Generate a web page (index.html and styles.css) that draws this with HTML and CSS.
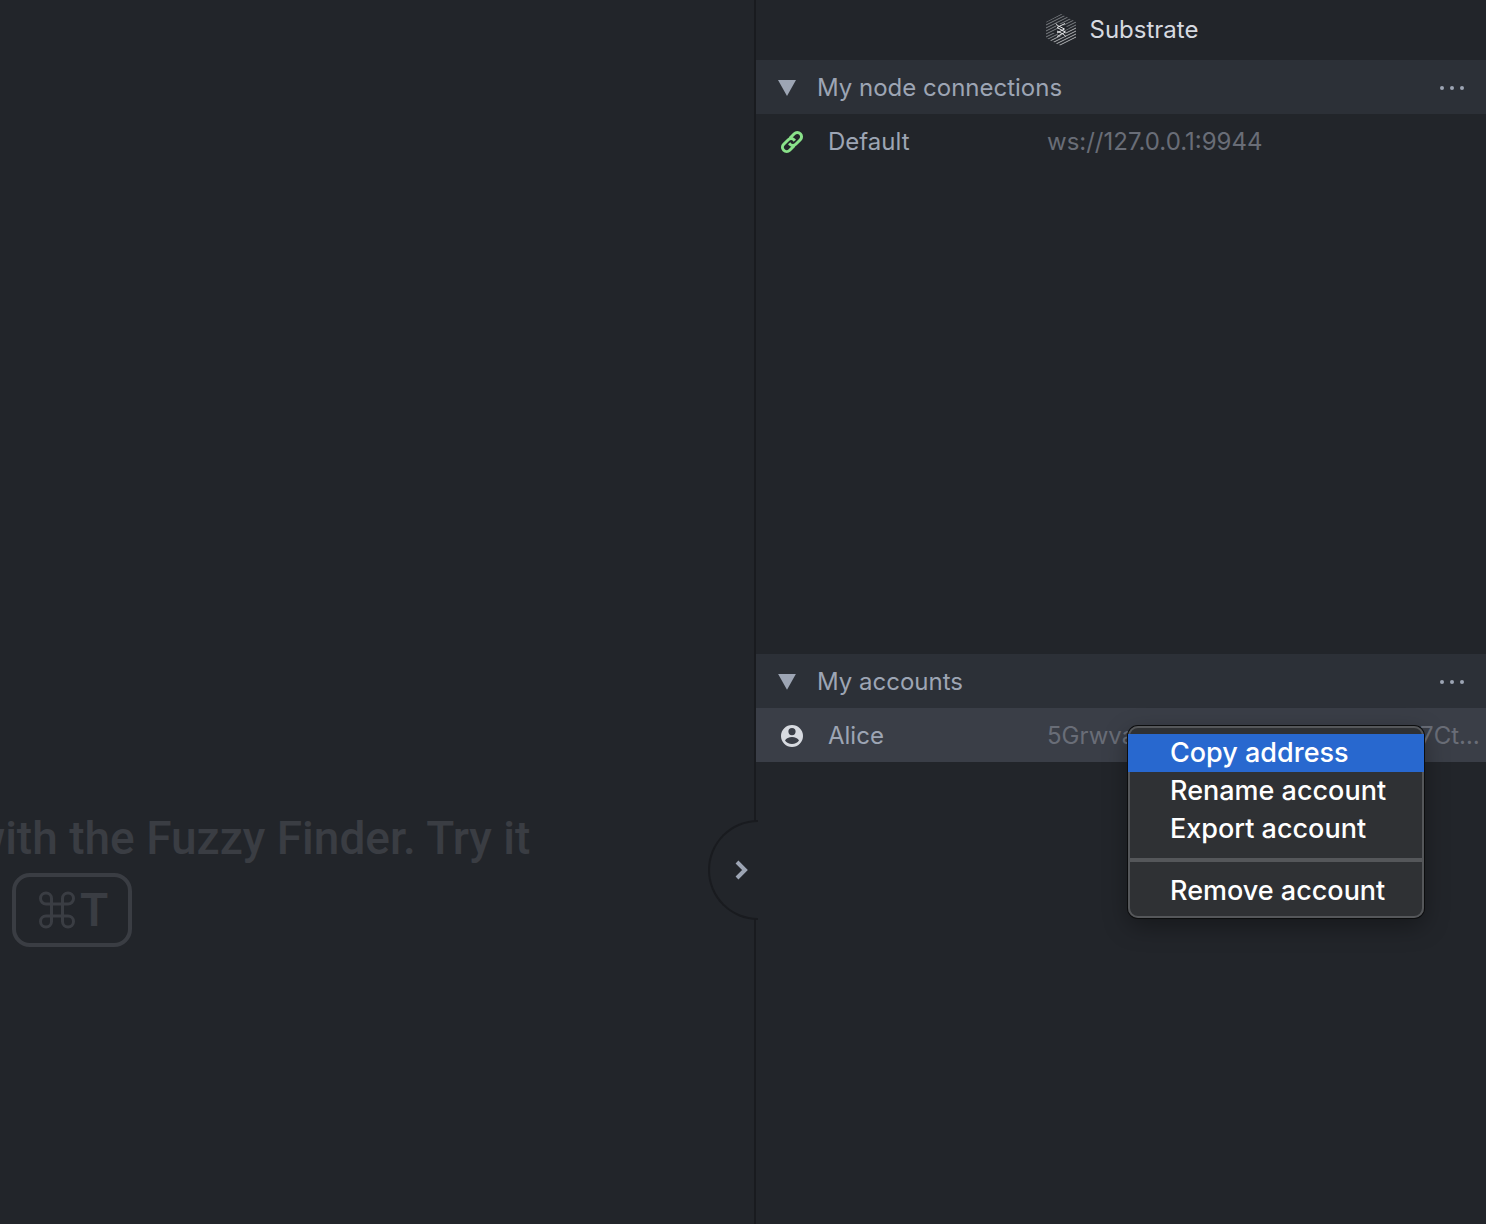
FILE: index.html
```html
<!DOCTYPE html>
<html lang="en">
<head>
<meta charset="utf-8">
<title>Substrate</title>
<link rel="stylesheet" href="styles.css">
</head>
<body>
<div class="workspace">
  <main class="editor">
    <div class="tip">
      <p class="tip-line">with the Fuzzy Finder. Try it</p>
      <p class="tip-line tip-keys"><kbd class="key"><svg class="cmd" viewBox="0 0 36 38" aria-label="Command"><path d="M12.500 13V7.500a5.500 5.500 0 1 0-5.500 5.500H29a5.500 5.500 0 1 0-5.500-5.500V30.500a5.500 5.500 0 1 0 5.500-5.500H7a5.500 5.500 0 1 0 5.500 5.500Z"/></svg>T</kbd></p>
    </div>
    <button class="toggle" aria-label="Toggle dock"><svg viewBox="0 0 14 20"><path d="M2 2l8 8-8 8"/></svg></button>
  </main>
  <aside class="dock">
    <header class="dock-title">
      <svg class="logo" viewBox="0 0 30 32" aria-hidden="true">
        <defs><clipPath id="hex"><path d="M15 0l15 8v16l-15 8-15-8V8z"/></clipPath></defs>
        <g clip-path="url(#hex)">
          <path class="hatch" d="M0 8L30-7M0 11L30-4M0 14L30-1M0 17L30 2M0 20L30 5M0 23L30 8M0 26L30 11"/>
          <path class="hatch bright" d="M0 29L30 14M0 32L30 17M0 35L30 20M0 38L30 23M0 41L30 26M0 44L30 29"/>
        </g>
        <path class="glyph-back" d="M11 11l8 3-8 4 8 3"/>
        <path class="glyph" d="M10 9.500l1.500 2 7 3.500M19 9.500l-8 4 8.500 4.500-8.500 4.500M11 17l7 3.500 1.500 2M18.500 15l-7.500 4"/>
      </svg>
      <span>Substrate</span>
    </header>
    <div class="panels">
      <section class="panel">
        <div class="panel-head"><span class="arrow"></span><h2>My node connections</h2>
          <button class="more" aria-label="Node menu"><i></i><i></i><i></i></button></div>
        <div class="row">
          <svg class="icon link" viewBox="0 0 24 24"><path d="M9.800 8.200L14.300 3.700a4 4 0 0 1 6 6L15.700 14.200a4 4 0 0 1-5.700 0l-.800-1M14.200 15.800L9.700 20.300a4 4 0 0 1-6-6L8.300 9.800a4 4 0 0 1 5.700 0l.800 1"/></svg>
          <span>Default</span><span class="detail">ws://127.0.0.1:9944</span>
        </div>
      </section>
      <section class="panel">
        <div class="panel-head"><span class="arrow"></span><h2>My accounts</h2>
          <button class="more" aria-label="Account menu"><i></i><i></i><i></i></button></div>
        <div class="row selected">
          <svg class="icon user" viewBox="0 0 24 24"><path fill-rule="evenodd" d="M12 1a11 11 0 1 0 0 22 11 11 0 0 0 0-22zM12 4a3.600 3.600 0 1 1 0 7.200A3.600 3.600 0 0 1 12 4zM5 16.500c1-2.200 4-3.500 7-3.500s6 1.300 7 3.500c-1.500 2.200-4 3.500-7 3.500s-5.500-1.300-7-3.500z"/></svg>
          <span>Alice</span><span class="detail">5GrwvaEF5zXb26Fz9rcQpDWS57CtERHpNehXCPcNoHGKutQY</span>
          <div class="menu" role="menu">
            <button class="item active" role="menuitem">Copy address</button>
            <button class="item" role="menuitem">Rename account</button>
            <button class="item" role="menuitem">Export account</button>
            <hr>
            <button class="item" role="menuitem">Remove account</button>
          </div>
        </div>
      </section>
    </div>
  </aside>
</div>
</body>
</html>
```
FILE: styles.css
```css
* { box-sizing: border-box; }
body {
  margin: 0;
  background: #22252a;
  color: #9da5b4;
  font: 24px/30px Inter, "Liberation Sans", sans-serif;
}
button { border: 0; padding: 0; background: none; color: inherit; font: inherit; }
h2, p { margin: 0; font-weight: inherit; font-size: inherit; }

.workspace {
  display: grid;
  grid-template-columns: minmax(0, 1fr) minmax(480px, 732px);
  height: 100vh;
  overflow: hidden;
}

.editor { position: relative; display: flex; align-items: center; }
.tip {
  flex: 1;
  overflow: hidden;
  padding-top: 526px;
  color: #3a3d43;
  font-family: Roboto, "Liberation Sans", sans-serif;
  font-size: 46px;
  font-weight: 500;
  line-height: 70px;
}
.tip-line { margin-left: -29px; white-space: nowrap; }
.tip-keys { margin-left: 12px; }
.key {
  display: inline-flex;
  align-items: center;
  gap: 5px;
  width: 120px;
  height: 74px;
  padding-left: 23px;
  border: 4px solid;
  border-radius: 18px;
  font: inherit;
  font-weight: 600;
}
.cmd { width: 36px; height: 38px; flex: none; fill: none; stroke: currentColor; stroke-width: 3; }

.toggle {
  position: absolute;
  right: -4px;
  top: 820px;
  z-index: 1;
  width: 50px;
  height: 100px;
  padding-left: 25px;
  border: 2px solid #191b1f;
  border-right: 0;
  border-radius: 50px 0 0 50px;
  background: #22252a;
  display: flex;
  align-items: center;
}
.toggle svg { width: 14px; height: 20px; fill: none; stroke: #9da5b4; stroke-width: 4; }

.dock {
  display: flex;
  flex-direction: column;
  min-width: 0;
  border-left: 2px solid #191b1f;
}
.dock-title {
  display: flex;
  align-items: center;
  justify-content: center;
  gap: 14px;
  height: 60px;
  padding-left: 2px;
  color: #d7dae0;
}
.logo { width: 30px; height: 32px; fill: none; }
.hatch { stroke: #7d8085; stroke-width: 1; }
.bright { stroke: #b0b2b5; }
.glyph-back { stroke: #22252a; stroke-width: 4; }
.glyph { stroke: #e4e5e7; stroke-width: 1; }

.panels { flex: 1; display: grid; grid-template-rows: 51fr 49fr; }
.panel-head {
  display: flex;
  align-items: center;
  height: 54px;
  padding: 2px 22px 0 22px;
  background: #2c3037;
}
.arrow {
  width: 18px;
  height: 16px;
  margin-right: 21px;
  background: #9da5b4;
  clip-path: polygon(0 0, 100% 0, 50% 100%);
}
.more { display: flex; gap: 6px; margin-left: auto; padding: 4px 0; }
.more i { width: 4px; height: 4px; border-radius: 50%; background: #9da5b4; }

.row {
  position: relative;
  display: grid;
  grid-template-columns: 24px 195px minmax(0, 1fr);
  column-gap: 24px;
  align-items: center;
  height: 54px;
  padding: 2px 2px 0 24px;
}
.selected { background: #3a3e47; }
.detail {
  overflow: hidden;
  color: #696d77;
  text-overflow: ellipsis;
  white-space: nowrap;
}
.icon { width: 24px; height: 24px; }
.link { fill: none; stroke: #8ae28a; stroke-width: 3; }
.user { fill: #d7dae0; }

.menu {
  position: absolute;
  top: 18px;
  right: 62px;
  width: 296px;
  padding: 8px 0;
  border-radius: 10px;
  background: #2f3134;
  box-shadow: inset 0 0 0 2px #55575a, 0 0 0 1px #0c0d0e, 0 8px 24px rgb(0 0 0 / 35%);
  color: #fff;
  font-size: 27px;
  font-weight: 500;
  line-height: 38px;
}
.item { display: block; width: 100%; height: 38px; padding-left: 42px; text-align: left; }
.active { background: #2868cf; }
.menu hr { height: 4px; margin: 10px 0; border: 0; background: #55575a; }
```
